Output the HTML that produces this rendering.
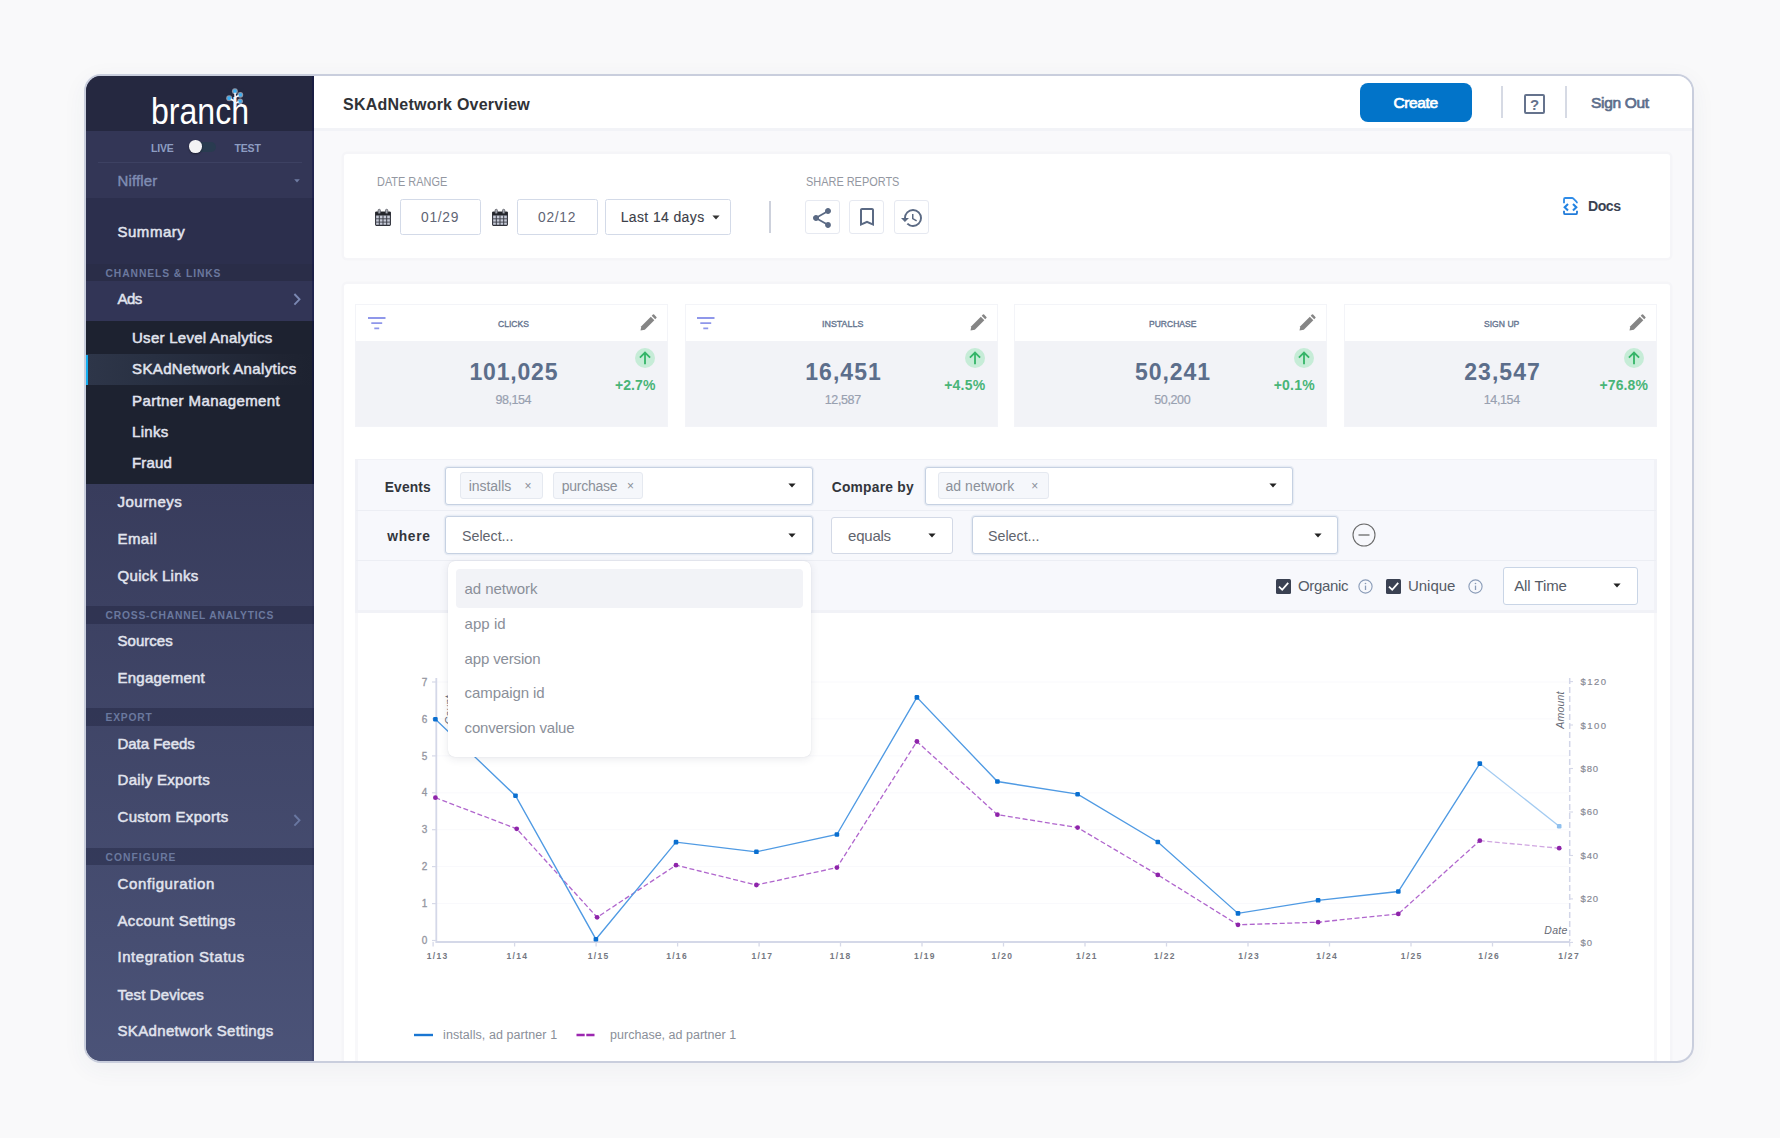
<!DOCTYPE html>
<html lang="en"><head><meta charset="utf-8"><title>SKAdNetwork Overview</title>
<style>
html,body{margin:0;padding:0}
body{width:1780px;height:1138px;overflow:hidden;position:relative;background:#f9f9fa;font-family:"Liberation Sans",sans-serif;}
.r{position:absolute;box-sizing:border-box}
.t{position:absolute;white-space:nowrap}
svg{position:absolute;overflow:visible}
</style></head><body>
<div class="r" style="left:84px;top:74px;width:1610px;height:989px;border:2px solid #c9cedd;border-radius:17px;overflow:hidden;background:#f9f9fb;box-shadow:0 6px 24px rgba(60,70,110,0.055)">
<div class="r" style="left:-86px;top:-76px;width:1780px;height:1138px">
<div class="r" style="left:86px;top:76px;width:228px;height:990px;background:#2c2f4d;"></div>
<div class="r" style="left:86px;top:76px;width:228px;height:55px;background:#252840;"></div>
<div class="r" style="left:86px;top:131px;width:228px;height:67px;background:#333656;"></div>
<div class="r" style="left:98px;top:162px;width:204px;height:1px;background:#3d4162;"></div>
<div class="r" style="left:86px;top:198px;width:228px;height:66px;background:#2c2f4d;"></div>
<div class="r" style="left:86px;top:264px;width:228px;height:17px;background:#2a2d48;"></div>
<div class="r" style="left:86px;top:281px;width:228px;height:40px;background:#323556;"></div>
<div class="r" style="left:86px;top:321px;width:228px;height:163px;background:#1d2230;"></div>
<div class="r" style="left:86px;top:354px;width:228px;height:31px;background:linear-gradient(90deg,#2e3649 0%,#283042 30%,#1f2432 85%,#1d2230 100%)"></div>
<div class="r" style="left:86px;top:354.5px;width:2px;height:30.5px;background:#14adf0;"></div>
<div class="r" style="left:86px;top:484px;width:228px;height:582px;background:linear-gradient(180deg,#383c5c 0%,#4b5378 100%)"></div>
<div class="r" style="left:86px;top:606px;width:228px;height:18px;background:rgba(30,32,60,0.400);"></div>
<div class="r" style="left:86px;top:708px;width:228px;height:18px;background:rgba(30,32,60,0.400);"></div>
<div class="r" style="left:86px;top:848px;width:228px;height:17px;background:rgba(30,32,60,0.400);"></div>
<div class="r" style="left:312px;top:76px;width:2.2px;height:408px;background:rgba(14,18,72,0.450);"></div>
<div class="r" style="left:312px;top:484px;width:2.2px;height:582px;background:rgba(14,18,72,0.130);"></div>
<span class="t" style="left:151.00px;top:91px;font-size:36px;line-height:41px;color:#ffffff;transform:scaleX(0.8903);transform-origin:0 50%;">branch</span>
<svg style="left:224px;top:86px" width="24" height="24" viewBox="0 0 24 24"><path d="M11.400 20 L11 6 M11.300 15.600 L5.600 12.400 M11.200 11.200 L16 9 M11.400 17.200 L16 15.300" stroke="#f4f5fa" stroke-width="1.700" fill="none" stroke-linecap="round"/><g fill="#e8f4ff" opacity="0.55"><circle cx="10.900" cy="5.200" r="2.900"/><circle cx="16.300" cy="8.800" r="2.900"/><circle cx="5.200" cy="12.200" r="3"/><circle cx="16.100" cy="15.200" r="2.800"/></g><g fill="#38aef5"><rect x="9.300" y="3.600" width="3.200" height="3.200" rx="0.800"/><rect x="14.700" y="7.200" width="3.200" height="3.200" rx="0.800"/><rect x="3.500" y="10.500" width="3.400" height="3.400" rx="0.800"/><rect x="14.600" y="13.700" width="3" height="3" rx="0.800"/></g></svg>
<span class="t" style="left:151.00px;top:142px;font-size:10.5px;line-height:12px;color:#8d9dc2;font-weight:700;letter-spacing:-0.180px;">LIVE</span>
<span class="t" style="left:234.50px;top:142px;font-size:10.5px;line-height:12px;color:#8d9dc2;font-weight:700;letter-spacing:-0.179px;">TEST</span>
<div class="r" style="left:190px;top:141.5px;width:25.5px;height:10px;background:#293b50;border-radius:5px"></div>
<div class="r" style="left:189.4px;top:140.3px;width:12.6px;height:12.6px;background:#f3f3f5;border-radius:50%;box-shadow:0 1px 2px rgba(0,0,0,.4)"></div>
<span class="t" style="left:117.50px;top:172px;font-size:15px;line-height:17px;color:#7f8db3;-webkit-text-stroke:0.4px #7f8db3;letter-spacing:0.150px;">Niffler</span>
<svg style="left:294px;top:178.500px" width="6" height="4" viewBox="0 0 6 4"><path d="M0.2 0.3 H5.8 L3 3.6 Z" fill="#6f7ca3"/></svg>
<span class="t" style="left:117.50px;top:223px;font-size:15px;line-height:17px;color:#e1e4ee;-webkit-text-stroke:0.5px #e1e4ee;letter-spacing:0.512px;">Summary</span>
<span class="t" style="left:105.50px;top:268px;font-size:10.3px;line-height:11px;color:#6a789e;font-weight:700;letter-spacing:0.915px;">CHANNELS &amp; LINKS</span>
<span class="t" style="left:117.50px;top:290px;font-size:15px;line-height:17px;color:#e1e4ee;-webkit-text-stroke:0.5px #e1e4ee;letter-spacing:-0.549px;">Ads</span>
<svg style="left:292.700px;top:293px" width="8" height="12" viewBox="0 0 8 12"><path d="M1.400 1 L6.500 6.300 L1.400 11.600" stroke="#7b88b2" stroke-width="1.900" fill="none"/></svg>
<span class="t" style="left:132.00px;top:329px;font-size:15px;line-height:17px;color:#e1e4ee;-webkit-text-stroke:0.5px #e1e4ee;letter-spacing:0.273px;">User Level Analytics</span>
<span class="t" style="left:132.00px;top:360px;font-size:15px;line-height:17px;color:#e1e4ee;-webkit-text-stroke:0.5px #e1e4ee;letter-spacing:0.376px;">SKAdNetwork Analytics</span>
<span class="t" style="left:132.00px;top:392px;font-size:15px;line-height:17px;color:#e1e4ee;-webkit-text-stroke:0.5px #e1e4ee;letter-spacing:0.402px;">Partner Management</span>
<span class="t" style="left:132.00px;top:423px;font-size:15px;line-height:17px;color:#e1e4ee;-webkit-text-stroke:0.5px #e1e4ee;letter-spacing:0.308px;">Links</span>
<span class="t" style="left:132.00px;top:454px;font-size:15px;line-height:17px;color:#e1e4ee;-webkit-text-stroke:0.5px #e1e4ee;letter-spacing:0.141px;">Fraud</span>
<span class="t" style="left:117.50px;top:493px;font-size:15px;line-height:17px;color:#e1e4ee;-webkit-text-stroke:0.5px #e1e4ee;letter-spacing:0.483px;">Journeys</span>
<span class="t" style="left:117.50px;top:530px;font-size:15px;line-height:17px;color:#e1e4ee;-webkit-text-stroke:0.5px #e1e4ee;letter-spacing:0.435px;">Email</span>
<span class="t" style="left:117.50px;top:567px;font-size:15px;line-height:17px;color:#e1e4ee;-webkit-text-stroke:0.5px #e1e4ee;letter-spacing:0.322px;">Quick Links</span>
<span class="t" style="left:105.50px;top:610px;font-size:10.3px;line-height:11px;color:#6a789e;font-weight:700;letter-spacing:0.787px;">CROSS-CHANNEL ANALYTICS</span>
<span class="t" style="left:117.50px;top:632px;font-size:15px;line-height:17px;color:#e1e4ee;-webkit-text-stroke:0.5px #e1e4ee;letter-spacing:0.037px;">Sources</span>
<span class="t" style="left:117.50px;top:669px;font-size:15px;line-height:17px;color:#e1e4ee;-webkit-text-stroke:0.5px #e1e4ee;letter-spacing:0.243px;">Engagement</span>
<span class="t" style="left:105.50px;top:712px;font-size:10.3px;line-height:11px;color:#6a789e;font-weight:700;letter-spacing:0.770px;">EXPORT</span>
<span class="t" style="left:117.50px;top:735px;font-size:15px;line-height:17px;color:#e1e4ee;-webkit-text-stroke:0.5px #e1e4ee;letter-spacing:-0.033px;">Data Feeds</span>
<span class="t" style="left:117.50px;top:771px;font-size:15px;line-height:17px;color:#e1e4ee;-webkit-text-stroke:0.5px #e1e4ee;letter-spacing:0.324px;">Daily Exports</span>
<span class="t" style="left:117.50px;top:808px;font-size:15px;line-height:17px;color:#e1e4ee;-webkit-text-stroke:0.5px #e1e4ee;letter-spacing:0.311px;">Custom Exports</span>
<svg style="left:292.700px;top:814px" width="8" height="12" viewBox="0 0 8 12"><path d="M1.400 1 L6.500 6.300 L1.400 11.600" stroke="#6977a1" stroke-width="1.900" fill="none"/></svg>
<span class="t" style="left:105.50px;top:852px;font-size:10.3px;line-height:11px;color:#6a789e;font-weight:700;letter-spacing:1.025px;">CONFIGURE</span>
<span class="t" style="left:117.50px;top:875px;font-size:15px;line-height:17px;color:#e1e4ee;-webkit-text-stroke:0.5px #e1e4ee;letter-spacing:0.627px;">Configuration</span>
<span class="t" style="left:117.50px;top:912px;font-size:15px;line-height:17px;color:#e1e4ee;-webkit-text-stroke:0.5px #e1e4ee;letter-spacing:0.345px;">Account Settings</span>
<span class="t" style="left:117.50px;top:948px;font-size:15px;line-height:17px;color:#e1e4ee;-webkit-text-stroke:0.5px #e1e4ee;letter-spacing:0.539px;">Integration Status</span>
<span class="t" style="left:117.50px;top:986px;font-size:15px;line-height:17px;color:#e1e4ee;-webkit-text-stroke:0.5px #e1e4ee;letter-spacing:0.111px;">Test Devices</span>
<span class="t" style="left:117.50px;top:1022px;font-size:15px;line-height:17px;color:#e1e4ee;-webkit-text-stroke:0.5px #e1e4ee;letter-spacing:0.342px;">SKAdnetwork Settings</span>
<div class="r" style="left:314px;top:76px;width:1380px;height:52.3px;background:#ffffff;"></div>
<div class="r" style="left:314px;top:128.3px;width:1380px;height:2.5px;background:#f2f3f7;"></div>
<span class="t" style="left:343.00px;top:96px;font-size:16px;line-height:17px;color:#303236;font-weight:700;letter-spacing:0.233px;">SKAdNetwork Overview</span>
<div class="r" style="left:1360px;top:83px;width:112px;height:39px;background:#0274c9;border-radius:8px"></div>
<span class="t" style="left:1393.50px;top:94px;font-size:15.5px;line-height:17px;color:#ffffff;-webkit-text-stroke:0.7px #ffffff;letter-spacing:-0.374px;">Create</span>
<div class="r" style="left:1501px;top:86px;width:1.5px;height:32px;background:#d6dae4;"></div>
<div class="r" style="left:1565px;top:86px;width:1.5px;height:32px;background:#d6dae4;"></div>
<div class="r" style="left:1524px;top:94px;width:21px;height:20px;border:2px solid #65738d;border-radius:2px"></div>
<span class="t" style="left:1530.02px;top:96px;font-size:15px;line-height:17px;color:#65738d;font-weight:700;">?</span>
<span class="t" style="left:1591.00px;top:94px;font-size:15.5px;line-height:17px;color:#5d6e8b;-webkit-text-stroke:0.7px #5d6e8b;letter-spacing:-0.309px;">Sign Out</span>
<div class="r" style="left:344px;top:154px;width:1326px;height:104px;background:#ffffff;border-radius:3px;box-shadow:0 0 0 2.500px #f5f5f8"></div>
<span class="t" style="left:376.80px;top:175px;font-size:12.2px;line-height:14px;color:#9397a1;transform:scaleX(0.8966);transform-origin:0 50%;">DATE RANGE</span>
<span class="t" style="left:806.00px;top:175px;font-size:12.2px;line-height:14px;color:#9397a1;transform:scaleX(0.8975);transform-origin:0 50%;">SHARE REPORTS</span>
<svg style="left:375px;top:208.600px" width="16" height="17" viewBox="0 0 16 17"><rect x="0.600" y="3" width="14.800" height="13.400" rx="0.800" fill="#c6cad7" stroke="#2e3038" stroke-width="1.100"/><path d="M0.600 3 h14.800 v3.400 h-14.800 z" fill="#23252b"/><path d="M0.600 9.800 h14.800 M0.600 13.100 h14.800" stroke="#4a4d58" stroke-width="1"/><path d="M4.300 6.400 v10 M8 6.400 v10 M11.700 6.400 v10" stroke="#3a3d47" stroke-width="1"/><rect x="3.100" y="0.300" width="2.300" height="4.300" rx="1" fill="#a8abb4" stroke="#54565e" stroke-width="0.700"/><rect x="10.500" y="0.300" width="2.300" height="4.300" rx="1" fill="#a8abb4" stroke="#54565e" stroke-width="0.700"/></svg>
<svg style="left:492.2px;top:208.600px" width="16" height="17" viewBox="0 0 16 17"><rect x="0.600" y="3" width="14.800" height="13.400" rx="0.800" fill="#c6cad7" stroke="#2e3038" stroke-width="1.100"/><path d="M0.600 3 h14.800 v3.400 h-14.800 z" fill="#23252b"/><path d="M0.600 9.800 h14.800 M0.600 13.100 h14.800" stroke="#4a4d58" stroke-width="1"/><path d="M4.300 6.400 v10 M8 6.400 v10 M11.700 6.400 v10" stroke="#3a3d47" stroke-width="1"/><rect x="3.100" y="0.300" width="2.300" height="4.300" rx="1" fill="#a8abb4" stroke="#54565e" stroke-width="0.700"/><rect x="10.500" y="0.300" width="2.300" height="4.300" rx="1" fill="#a8abb4" stroke="#54565e" stroke-width="0.700"/></svg>
<div class="r" style="left:400.3px;top:198.7px;width:80.6px;height:36.3px;background:#fff;border:1.500px solid #d3dae8;border-radius:2.500px"></div>
<div class="r" style="left:516.7px;top:198.7px;width:80.9px;height:36.3px;background:#fff;border:1.500px solid #d3dae8;border-radius:2.500px"></div>
<span class="t" style="left:421.00px;top:210px;font-size:13.8px;line-height:15px;color:#5f6474;letter-spacing:0.717px;">01/29</span>
<span class="t" style="left:538.00px;top:210px;font-size:13.8px;line-height:15px;color:#5f6474;letter-spacing:0.717px;">02/12</span>
<div class="r" style="left:605.2px;top:198.7px;width:125.8px;height:36.3px;background:#fff;border:1.500px solid #d3dae8;border-radius:2.500px"></div>
<span class="t" style="left:620.70px;top:209px;font-size:14px;line-height:16px;color:#3c4049;-webkit-text-stroke:0.12px #3c4049;letter-spacing:0.369px;">Last 14 days</span>
<svg style="left:712.3px;top:215px" width="8" height="5" viewBox="0 0 8 5"><path d="M0.4 0.4 H7.6 L4 4.4 Z" fill="#333"/></svg>
<div class="r" style="left:769px;top:201px;width:1.5px;height:32px;background:#cdd1dc;"></div>
<div class="r" style="left:805.2px;top:199.8px;width:34.6px;height:34.6px;background:#fff;border:1.500px solid #e6e9f1;border-radius:3px"></div>
<div class="r" style="left:849.4px;top:199.8px;width:34.6px;height:34.6px;background:#fff;border:1.500px solid #e6e9f1;border-radius:3px"></div>
<div class="r" style="left:894.2px;top:199.8px;width:34.6px;height:34.6px;background:#fff;border:1.500px solid #e6e9f1;border-radius:3px"></div>
<svg style="left:810.300px;top:205.500px" width="24" height="24" viewBox="0 0 24 24"><path d="M18 16.08c-.76 0-1.44.3-1.96.77L8.91 12.7c.05-.23.09-.46.09-.7s-.04-.47-.09-.7l7.05-4.11c.54.5 1.25.81 2.04.81 1.66 0 3-1.34 3-3s-1.340-3-3-3-3 1.340-3 3c0 .24.04.47.09.7L8.040 9.810C7.500 9.310 6.790 9 6 9c-1.660 0-3 1.340-3 3s1.340 3 3 3c.79 0 1.500-.31 2.040-.81l7.120 4.160c-.05.21-.08.43-.08.650 0 1.610 1.310 2.920 2.920 2.920s2.920-1.310 2.920-2.920-1.310-2.920-2.920-2.920z" fill="#5b6a84"/></svg>
<svg style="left:855.300px;top:205.200px" width="24" height="24" viewBox="0 0 24 24"><path d="M17 3H7c-1.100 0-2 .9-2 2v16l7-3 7 3V5c0-1.100-.9-2-2-2zm0 15l-5-2.180L7 18V5h10v13z" fill="#5b6a84"/></svg>
<svg style="left:900.300px;top:205.500px" width="24" height="24" viewBox="0 0 24 24"><path d="M13 3a9 9 0 0 0-9 9H1l3.890 3.890.07.14L9 12H6c0-3.870 3.130-7 7-7s7 3.130 7 7-3.130 7-7 7c-1.930 0-3.680-.79-4.940-2.060l-1.420 1.420A8.954 8.954 0 0 0 13 21a9 9 0 0 0 0-18zm-1 5v5l4.280 2.540.72-1.210-3.500-2.080V8H12z" fill="#5b6a84"/></svg>
<svg style="left:1563.300px;top:196.900px" width="15" height="18.200" viewBox="0 0 15 18.200"><path d="M1 6.300 V2.300 Q1 1 2.300 1 H9 Q9.800 1 10.400 1.600 L13.400 4.600 Q14 5.200 14 6.300" fill="none" stroke="#2f8ce8" stroke-width="1.800"/><path d="M1 13.800 V15.900 Q1 17.200 2.300 17.200 H12.700 Q14 17.200 14 15.900 V13.800" fill="none" stroke="#1f7ad9" stroke-width="1.800"/><path d="M5 7.100 L1.700 10.300 L5 13.500 M10 7.100 L13.300 10.300 L10 13.500" fill="none" stroke="#2383e2" stroke-width="2.100"/></svg>
<span class="t" style="left:1587.90px;top:198px;font-size:14.1px;line-height:16px;color:#3a4252;font-weight:700;letter-spacing:-0.426px;">Docs</span>
<div class="r" style="left:344px;top:284px;width:1326px;height:800px;background:#ffffff;border-radius:3px;box-shadow:0 0 0 2.500px #f5f5f8"></div>
<div class="r" style="left:355px;top:304px;width:313px;height:123px;background:#f2f3f7;border:1px solid #f3f4f8"></div>
<div class="r" style="left:356px;top:305px;width:311px;height:36px;background:#ffffff;"></div>
<span class="t" style="left:498.00px;top:318px;font-size:9.5px;line-height:11px;color:#66758f;-webkit-text-stroke:0.38px #66758f;transform:scaleX(0.8984);transform-origin:0 50%;">CLICKS</span>
<span class="t" style="left:469.50px;top:359px;font-size:23px;line-height:26px;color:#5c6e8b;font-weight:700;letter-spacing:0.810px;">101,025</span>
<span class="t" style="left:495.50px;top:393px;font-size:12.5px;line-height:14px;color:#98a0b0;-webkit-text-stroke:0.2px #98a0b0;letter-spacing:-0.467px;">98,154</span>
<span class="t" style="left:614.95px;top:377px;font-size:14px;line-height:16px;color:#49b577;font-weight:700;letter-spacing:0.104px;">+2.7%</span>
<svg style="left:635px;top:347.500px" width="20" height="20" viewBox="0 0 20 20"><circle cx="10" cy="10" r="10" fill="#c6ecd7"/><path d="M10 16.300 V4.600 M4.900 9.600 L10 4.500 L15.100 9.600" stroke="#34b568" stroke-width="1.800" fill="none"/></svg>
<svg style="left:640px;top:314px" width="17" height="17" viewBox="0 0 17 17"><path d="M0.500 16.500 L1.300 12.200 L10.800 2.700 L14.300 6.200 L4.800 15.700 Z" fill="#858585"/><path d="M11.700 1.800 L12.900 0.600 Q13.500 0 14.100 0.600 L16.400 2.900 Q17 3.500 16.400 4.100 L15.200 5.300 Z" fill="#858585"/></svg>
<svg style="left:367.5px;top:317px" width="18" height="13" viewBox="0 0 18 13"><path d="M0 1 H17.500 M3.300 6.200 H14.200 M6.300 11.400 H11.200" stroke="#8f97ea" stroke-width="1.800" fill="none"/></svg>
<div class="r" style="left:684.5px;top:304px;width:313px;height:123px;background:#f2f3f7;border:1px solid #f3f4f8"></div>
<div class="r" style="left:685.5px;top:305px;width:311px;height:36px;background:#ffffff;"></div>
<span class="t" style="left:822.25px;top:318px;font-size:9.5px;line-height:11px;color:#66758f;-webkit-text-stroke:0.38px #66758f;transform:scaleX(0.9354);transform-origin:0 50%;">INSTALLS</span>
<span class="t" style="left:805.25px;top:359px;font-size:23px;line-height:26px;color:#5c6e8b;font-weight:700;letter-spacing:1.030px;">16,451</span>
<span class="t" style="left:824.75px;top:393px;font-size:12.5px;line-height:14px;color:#98a0b0;-webkit-text-stroke:0.2px #98a0b0;letter-spacing:-0.367px;">12,587</span>
<span class="t" style="left:944.20px;top:377px;font-size:14px;line-height:16px;color:#49b577;font-weight:700;letter-spacing:0.229px;">+4.5%</span>
<svg style="left:964.5px;top:347.500px" width="20" height="20" viewBox="0 0 20 20"><circle cx="10" cy="10" r="10" fill="#c6ecd7"/><path d="M10 16.300 V4.600 M4.900 9.600 L10 4.500 L15.100 9.600" stroke="#34b568" stroke-width="1.800" fill="none"/></svg>
<svg style="left:969.5px;top:314px" width="17" height="17" viewBox="0 0 17 17"><path d="M0.500 16.500 L1.300 12.200 L10.800 2.700 L14.300 6.200 L4.800 15.700 Z" fill="#858585"/><path d="M11.700 1.800 L12.900 0.600 Q13.500 0 14.100 0.600 L16.400 2.900 Q17 3.500 16.400 4.100 L15.200 5.300 Z" fill="#858585"/></svg>
<svg style="left:697.0px;top:317px" width="18" height="13" viewBox="0 0 18 13"><path d="M0 1 H17.500 M3.300 6.200 H14.200 M6.300 11.400 H11.200" stroke="#8f97ea" stroke-width="1.800" fill="none"/></svg>
<div class="r" style="left:1014px;top:304px;width:313px;height:123px;background:#f2f3f7;border:1px solid #f3f4f8"></div>
<div class="r" style="left:1015px;top:305px;width:311px;height:36px;background:#ffffff;"></div>
<span class="t" style="left:1148.75px;top:318px;font-size:9.5px;line-height:11px;color:#66758f;-webkit-text-stroke:0.38px #66758f;transform:scaleX(0.8966);transform-origin:0 50%;">PURCHASE</span>
<span class="t" style="left:1135.00px;top:359px;font-size:23px;line-height:26px;color:#5c6e8b;font-weight:700;letter-spacing:0.930px;">50,241</span>
<span class="t" style="left:1154.25px;top:393px;font-size:12.5px;line-height:14px;color:#98a0b0;-webkit-text-stroke:0.2px #98a0b0;letter-spacing:-0.367px;">50,200</span>
<span class="t" style="left:1273.70px;top:377px;font-size:14px;line-height:16px;color:#49b577;font-weight:700;letter-spacing:0.229px;">+0.1%</span>
<svg style="left:1294px;top:347.500px" width="20" height="20" viewBox="0 0 20 20"><circle cx="10" cy="10" r="10" fill="#c6ecd7"/><path d="M10 16.300 V4.600 M4.900 9.600 L10 4.500 L15.100 9.600" stroke="#34b568" stroke-width="1.800" fill="none"/></svg>
<svg style="left:1299px;top:314px" width="17" height="17" viewBox="0 0 17 17"><path d="M0.500 16.500 L1.300 12.200 L10.800 2.700 L14.300 6.200 L4.800 15.700 Z" fill="#858585"/><path d="M11.700 1.800 L12.900 0.600 Q13.500 0 14.100 0.600 L16.400 2.900 Q17 3.500 16.400 4.100 L15.200 5.300 Z" fill="#858585"/></svg>
<div class="r" style="left:1343.5px;top:304px;width:313px;height:123px;background:#f2f3f7;border:1px solid #f3f4f8"></div>
<div class="r" style="left:1344.5px;top:305px;width:311px;height:36px;background:#ffffff;"></div>
<span class="t" style="left:1484.25px;top:318px;font-size:9.5px;line-height:11px;color:#66758f;-webkit-text-stroke:0.38px #66758f;transform:scaleX(0.9044);transform-origin:0 50%;">SIGN UP</span>
<span class="t" style="left:1464.25px;top:359px;font-size:23px;line-height:26px;color:#5c6e8b;font-weight:700;letter-spacing:1.030px;">23,547</span>
<span class="t" style="left:1483.75px;top:393px;font-size:12.5px;line-height:14px;color:#98a0b0;-webkit-text-stroke:0.2px #98a0b0;letter-spacing:-0.367px;">14,154</span>
<span class="t" style="left:1599.45px;top:377px;font-size:14px;line-height:16px;color:#49b577;font-weight:700;letter-spacing:0.126px;">+76.8%</span>
<svg style="left:1623.5px;top:347.500px" width="20" height="20" viewBox="0 0 20 20"><circle cx="10" cy="10" r="10" fill="#c6ecd7"/><path d="M10 16.300 V4.600 M4.900 9.600 L10 4.500 L15.100 9.600" stroke="#34b568" stroke-width="1.800" fill="none"/></svg>
<svg style="left:1628.5px;top:314px" width="17" height="17" viewBox="0 0 17 17"><path d="M0.500 16.500 L1.300 12.200 L10.800 2.700 L14.300 6.200 L4.800 15.700 Z" fill="#858585"/><path d="M11.700 1.800 L12.900 0.600 Q13.500 0 14.100 0.600 L16.400 2.900 Q17 3.500 16.400 4.100 L15.200 5.300 Z" fill="#858585"/></svg>
<div class="r" style="left:355px;top:459px;width:1302px;height:153.5px;background:#f7f8fc;border:3px solid #f1f2f7;border-top-width:1.500px"></div>
<div class="r" style="left:356px;top:510px;width:1300px;height:1px;background:#eceef4;"></div>
<div class="r" style="left:356px;top:560px;width:1300px;height:1px;background:#eceef4;"></div>
<span class="t" style="left:384.70px;top:480px;font-size:13.8px;line-height:15px;color:#33363c;font-weight:700;letter-spacing:0.169px;">Events</span>
<div class="r" style="left:445px;top:467px;width:368px;height:38px;background:#fff;border:1px solid #c6d1e2;border-radius:3px;box-shadow:0 0 0 1.200px rgba(205,215,231,0.380)"></div>
<div class="r" style="left:460px;top:472.3px;width:83px;height:26.7px;background:#f5f7fb;border:1px solid #e5e9f0;border-radius:3px"></div>
<span class="t" style="left:468.70px;top:478px;font-size:14px;line-height:16px;color:#8b9099;letter-spacing:-0.028px;">installs</span>
<span class="t" style="left:524.50px;top:479px;font-size:12px;line-height:14px;color:#8b9099;">×</span>
<div class="r" style="left:553px;top:472.3px;width:90px;height:26.7px;background:#f5f7fb;border:1px solid #e5e9f0;border-radius:3px"></div>
<span class="t" style="left:561.70px;top:478px;font-size:14px;line-height:16px;color:#8b9099;letter-spacing:-0.256px;">purchase</span>
<span class="t" style="left:627.00px;top:479px;font-size:12px;line-height:14px;color:#8b9099;">×</span>
<svg style="left:788.4px;top:483.3px" width="8" height="5" viewBox="0 0 8 5"><path d="M0.4 0.4 H7.6 L4 4.4 Z" fill="#222"/></svg>
<span class="t" style="left:831.70px;top:480px;font-size:13.8px;line-height:15px;color:#33363c;font-weight:700;letter-spacing:0.250px;">Compare by</span>
<div class="r" style="left:924.5px;top:466.5px;width:368px;height:38px;background:#fff;border:1px solid #c6d1e2;border-radius:3px;box-shadow:0 0 0 1.200px rgba(205,215,231,0.380)"></div>
<div class="r" style="left:938px;top:472.3px;width:110.5px;height:26.7px;background:#f5f7fb;border:1px solid #e5e9f0;border-radius:3px"></div>
<span class="t" style="left:945.50px;top:478px;font-size:14px;line-height:16px;color:#8b9099;letter-spacing:0.035px;">ad network</span>
<span class="t" style="left:1031.30px;top:479px;font-size:12px;line-height:14px;color:#8b9099;">×</span>
<svg style="left:1268.8px;top:483.3px" width="8" height="5" viewBox="0 0 8 5"><path d="M0.4 0.4 H7.6 L4 4.4 Z" fill="#222"/></svg>
<span class="t" style="left:387.30px;top:529px;font-size:13.8px;line-height:15px;color:#33363c;font-weight:700;letter-spacing:0.704px;">where</span>
<div class="r" style="left:445px;top:516px;width:368px;height:38px;background:#fff;border:1px solid #c6d1e2;border-radius:3px;box-shadow:0 0 0 1.200px rgba(205,215,231,0.380)"></div>
<span class="t" style="left:462.00px;top:527px;font-size:15px;line-height:17px;color:#5f646d;transform:scaleX(0.9503);transform-origin:0 50%;">Select...</span>
<svg style="left:788.4px;top:533px" width="8" height="5" viewBox="0 0 8 5"><path d="M0.4 0.4 H7.6 L4 4.4 Z" fill="#222"/></svg>
<div class="r" style="left:831px;top:516.5px;width:121.5px;height:37.5px;background:#fff;border:1px solid #d3d9e6;border-radius:3px"></div>
<span class="t" style="left:848.10px;top:527px;font-size:15px;line-height:17px;color:#5f646d;letter-spacing:-0.241px;">equals</span>
<svg style="left:928.1px;top:533px" width="8" height="5" viewBox="0 0 8 5"><path d="M0.4 0.4 H7.6 L4 4.4 Z" fill="#222"/></svg>
<div class="r" style="left:972.3px;top:516px;width:366px;height:38px;background:#fff;border:1px solid #c6d1e2;border-radius:3px;box-shadow:0 0 0 1.200px rgba(205,215,231,0.380)"></div>
<span class="t" style="left:988.30px;top:527px;font-size:15px;line-height:17px;color:#5f646d;transform:scaleX(0.9503);transform-origin:0 50%;">Select...</span>
<svg style="left:1314.2px;top:533px" width="8" height="5" viewBox="0 0 8 5"><path d="M0.4 0.4 H7.6 L4 4.4 Z" fill="#222"/></svg>
<svg style="left:1352px;top:523px" width="24" height="24" viewBox="0 0 24 24"><circle cx="12" cy="12" r="11" fill="none" stroke="#6a6a6a" stroke-width="1.100"/><path d="M6.500 12 H17.500" stroke="#6a6a6a" stroke-width="1.300"/></svg>
<svg style="left:1276.2px;top:578.800px" width="15" height="15" viewBox="0 0 15 15"><rect x="0" y="0" width="15" height="15" rx="1.500" fill="#3a4152"/><path d="M3 7.600 L6.200 10.800 L12.200 3.800" stroke="#fff" stroke-width="1.800" fill="none"/></svg>
<span class="t" style="left:1298.00px;top:577px;font-size:15px;line-height:17px;color:#555b66;letter-spacing:-0.354px;">Organic</span>
<svg style="left:1358.1px;top:578.500px" width="15" height="15" viewBox="0 0 15 15"><circle cx="7.500" cy="7.500" r="6.600" fill="none" stroke="#8a9cb8" stroke-width="1.100"/><path d="M7.500 6.600 V11" stroke="#8a9cb8" stroke-width="1.300"/><circle cx="7.500" cy="4.500" r="0.800" fill="#8a9cb8"/></svg>
<svg style="left:1385.8px;top:578.800px" width="15" height="15" viewBox="0 0 15 15"><rect x="0" y="0" width="15" height="15" rx="1.500" fill="#3a4152"/><path d="M3 7.600 L6.200 10.800 L12.200 3.800" stroke="#fff" stroke-width="1.800" fill="none"/></svg>
<span class="t" style="left:1408.00px;top:577px;font-size:15px;line-height:17px;color:#555b66;letter-spacing:-0.027px;">Unique</span>
<svg style="left:1467.7px;top:578.500px" width="15" height="15" viewBox="0 0 15 15"><circle cx="7.500" cy="7.500" r="6.600" fill="none" stroke="#8a9cb8" stroke-width="1.100"/><path d="M7.500 6.600 V11" stroke="#8a9cb8" stroke-width="1.300"/><circle cx="7.500" cy="4.500" r="0.800" fill="#8a9cb8"/></svg>
<div class="r" style="left:1502.5px;top:567px;width:135.5px;height:37.5px;background:#fff;border:1px solid #c9d5e6;border-radius:3px"></div>
<span class="t" style="left:1514.20px;top:577px;font-size:15px;line-height:17px;color:#555b66;letter-spacing:-0.092px;">All Time</span>
<svg style="left:1613.4px;top:583px" width="8" height="5" viewBox="0 0 8 5"><path d="M0.4 0.4 H7.6 L4 4.4 Z" fill="#222"/></svg>
<div class="r" style="left:355px;top:612.5px;width:1302px;height:500px;background:#ffffff;border-left:3px solid #f8f8fa;border-right:3px solid #f8f8fa"></div>
<svg style="left:0;top:0" width="1780" height="1138" viewBox="0 0 1780 1138"><path d="M437 903.6 H1569" stroke="#f9f9fc" stroke-width="1"/><path d="M437 866.6 H1569" stroke="#f9f9fc" stroke-width="1"/><path d="M437 829.7 H1569" stroke="#f9f9fc" stroke-width="1"/><path d="M437 792.8 H1569" stroke="#f9f9fc" stroke-width="1"/><path d="M437 755.9 H1569" stroke="#f9f9fc" stroke-width="1"/><path d="M437 718.9 H1569" stroke="#f9f9fc" stroke-width="1"/><path d="M437 682.0 H1569" stroke="#f9f9fc" stroke-width="1"/><path d="M436.300 678 V942 H1570" stroke="#d4d8e8" stroke-width="1.800" fill="none"/><path d="M1569.7 678 V941" stroke="#d2d6e8" stroke-width="1.500" stroke-dasharray="6 3" fill="none"/><path d="M433.1 942 V946.500" stroke="#d6d9e8" stroke-width="1.300"/><path d="M514.6 942 V946.500" stroke="#d6d9e8" stroke-width="1.300"/><path d="M596.1 942 V946.500" stroke="#d6d9e8" stroke-width="1.300"/><path d="M677.6 942 V946.500" stroke="#d6d9e8" stroke-width="1.300"/><path d="M759.1 942 V946.500" stroke="#d6d9e8" stroke-width="1.300"/><path d="M840.5 942 V946.500" stroke="#d6d9e8" stroke-width="1.300"/><path d="M922.0 942 V946.500" stroke="#d6d9e8" stroke-width="1.300"/><path d="M1003.5 942 V946.500" stroke="#d6d9e8" stroke-width="1.300"/><path d="M1085.0 942 V946.500" stroke="#d6d9e8" stroke-width="1.300"/><path d="M1166.5 942 V946.500" stroke="#d6d9e8" stroke-width="1.300"/><path d="M1248.0 942 V946.500" stroke="#d6d9e8" stroke-width="1.300"/><path d="M1329.5 942 V946.500" stroke="#d6d9e8" stroke-width="1.300"/><path d="M1411.0 942 V946.500" stroke="#d6d9e8" stroke-width="1.300"/><path d="M1492.5 942 V946.500" stroke="#d6d9e8" stroke-width="1.300"/><path d="M1569.7 942 V946.500" stroke="#d6d9e8" stroke-width="1.300"/><path d="M432 940.5 H436" stroke="#d6d9e8" stroke-width="1.200"/><path d="M432 903.6 H436" stroke="#d6d9e8" stroke-width="1.200"/><path d="M432 866.6 H436" stroke="#d6d9e8" stroke-width="1.200"/><path d="M432 829.7 H436" stroke="#d6d9e8" stroke-width="1.200"/><path d="M432 792.8 H436" stroke="#d6d9e8" stroke-width="1.200"/><path d="M432 755.9 H436" stroke="#d6d9e8" stroke-width="1.200"/><path d="M432 718.9 H436" stroke="#d6d9e8" stroke-width="1.200"/><path d="M432 682.0 H436" stroke="#d6d9e8" stroke-width="1.200"/><path d="M1569 942.4 H1573" stroke="#d4d7e8" stroke-width="1.100"/><path d="M1569 898.9 H1573" stroke="#d4d7e8" stroke-width="1.100"/><path d="M1569 855.5 H1573" stroke="#d4d7e8" stroke-width="1.100"/><path d="M1569 812.0 H1573" stroke="#d4d7e8" stroke-width="1.100"/><path d="M1569 768.5 H1573" stroke="#d4d7e8" stroke-width="1.100"/><path d="M1569 725.0 H1573" stroke="#d4d7e8" stroke-width="1.100"/><path d="M1569 681.6 H1573" stroke="#d4d7e8" stroke-width="1.100"/><path d="M435.4 797.7 L516.7 828.8 L597.1 917.3 L676.0 865.2 L756.4 885.0 L836.9 867.6 L916.9 741.5 L997.4 814.7 L1077.6 827.6 L1157.8 874.9 L1238.0 924.8 L1318.1 922.2 L1398.3 913.9 L1479.8 840.7" stroke="#b066cd" stroke-width="1.300" stroke-dasharray="5 2.500" fill="none"/><path d="M1479.8 840.7 L1559.2 848.2" stroke="#d0a6e1" stroke-width="1.300" stroke-dasharray="5 2.500" fill="none"/><path d="M435.4 719.2 L515.5 795.7 L595.9 939.2 L676.0 842.1 L756.4 851.8 L836.9 834.5 L916.9 697.4 L997.4 781.5 L1077.6 794.2 L1157.8 842.0 L1238.0 913.4 L1318.1 900.3 L1398.3 891.5 L1479.8 763.6" stroke="#4f9ae3" stroke-width="1.350" fill="none"/><path d="M1479.8 763.6 L1559.2 826.2" stroke="#a3cbf1" stroke-width="1.300" fill="none"/><circle cx="435.4" cy="797.7" r="2.400" fill="#8e24aa"/><circle cx="516.7" cy="828.8" r="2.400" fill="#8e24aa"/><circle cx="597.1" cy="917.3" r="2.400" fill="#8e24aa"/><circle cx="676.0" cy="865.2" r="2.400" fill="#8e24aa"/><circle cx="756.4" cy="885.0" r="2.400" fill="#8e24aa"/><circle cx="836.9" cy="867.6" r="2.400" fill="#8e24aa"/><circle cx="916.9" cy="741.5" r="2.400" fill="#8e24aa"/><circle cx="997.4" cy="814.7" r="2.400" fill="#8e24aa"/><circle cx="1077.6" cy="827.6" r="2.400" fill="#8e24aa"/><circle cx="1157.8" cy="874.9" r="2.400" fill="#8e24aa"/><circle cx="1238.0" cy="924.8" r="2.400" fill="#8e24aa"/><circle cx="1318.1" cy="922.2" r="2.400" fill="#8e24aa"/><circle cx="1398.3" cy="913.9" r="2.400" fill="#8e24aa"/><circle cx="1479.8" cy="840.7" r="2.400" fill="#8e24aa"/><circle cx="1559.2" cy="848.2" r="2.400" fill="#8e24aa"/><rect x="433.1" y="716.9" width="4.600" height="4.600" rx="1.200" fill="#0a6fd0"/><rect x="513.2" y="793.4" width="4.600" height="4.600" rx="1.200" fill="#0a6fd0"/><rect x="593.6" y="936.9" width="4.600" height="4.600" rx="1.200" fill="#0a6fd0"/><rect x="673.7" y="839.8" width="4.600" height="4.600" rx="1.200" fill="#0a6fd0"/><rect x="754.1" y="849.5" width="4.600" height="4.600" rx="1.200" fill="#0a6fd0"/><rect x="834.6" y="832.2" width="4.600" height="4.600" rx="1.200" fill="#0a6fd0"/><rect x="914.6" y="695.1" width="4.600" height="4.600" rx="1.200" fill="#0a6fd0"/><rect x="995.1" y="779.2" width="4.600" height="4.600" rx="1.200" fill="#0a6fd0"/><rect x="1075.3" y="791.9" width="4.600" height="4.600" rx="1.200" fill="#0a6fd0"/><rect x="1155.5" y="839.7" width="4.600" height="4.600" rx="1.200" fill="#0a6fd0"/><rect x="1235.7" y="911.1" width="4.600" height="4.600" rx="1.200" fill="#0a6fd0"/><rect x="1315.8" y="898.0" width="4.600" height="4.600" rx="1.200" fill="#0a6fd0"/><rect x="1396.0" y="889.2" width="4.600" height="4.600" rx="1.200" fill="#0a6fd0"/><rect x="1477.5" y="761.3" width="4.600" height="4.600" rx="1.200" fill="#0a6fd0"/><rect x="1556.9" y="823.9" width="4.600" height="4.600" rx="1.200" fill="#8fc0ee"/><path d="M414 1035 H433" stroke="#1976d2" stroke-width="2.400"/><path d="M576.500 1035 H595" stroke="#9c27b0" stroke-width="2.400" stroke-dasharray="8.200 1.600"/></svg>
<span class="t" style="left:421.64px;top:935px;font-size:10px;line-height:11px;color:#9395a0;-webkit-text-stroke:0.3px #9395a0;">0</span>
<span class="t" style="left:421.64px;top:898px;font-size:10px;line-height:11px;color:#9395a0;-webkit-text-stroke:0.3px #9395a0;">1</span>
<span class="t" style="left:421.64px;top:861px;font-size:10px;line-height:11px;color:#9395a0;-webkit-text-stroke:0.3px #9395a0;">2</span>
<span class="t" style="left:421.64px;top:824px;font-size:10px;line-height:11px;color:#9395a0;-webkit-text-stroke:0.3px #9395a0;">3</span>
<span class="t" style="left:421.64px;top:787px;font-size:10px;line-height:11px;color:#9395a0;-webkit-text-stroke:0.3px #9395a0;">4</span>
<span class="t" style="left:421.64px;top:751px;font-size:10px;line-height:11px;color:#9395a0;-webkit-text-stroke:0.3px #9395a0;">5</span>
<span class="t" style="left:421.64px;top:714px;font-size:10px;line-height:11px;color:#9395a0;-webkit-text-stroke:0.3px #9395a0;">6</span>
<span class="t" style="left:421.64px;top:677px;font-size:10px;line-height:11px;color:#9395a0;-webkit-text-stroke:0.3px #9395a0;">7</span>
<span class="t" style="left:426.75px;top:951px;font-size:8.5px;line-height:10px;color:#757882;font-weight:700;letter-spacing:1.319px;">1/13</span>
<span class="t" style="left:506.45px;top:951px;font-size:8.5px;line-height:10px;color:#757882;font-weight:700;letter-spacing:1.319px;">1/14</span>
<span class="t" style="left:587.75px;top:951px;font-size:8.5px;line-height:10px;color:#757882;font-weight:700;letter-spacing:1.319px;">1/15</span>
<span class="t" style="left:666.15px;top:951px;font-size:8.5px;line-height:10px;color:#757882;font-weight:700;letter-spacing:1.319px;">1/16</span>
<span class="t" style="left:751.45px;top:951px;font-size:8.5px;line-height:10px;color:#757882;font-weight:700;letter-spacing:1.319px;">1/17</span>
<span class="t" style="left:829.75px;top:951px;font-size:8.5px;line-height:10px;color:#757882;font-weight:700;letter-spacing:1.319px;">1/18</span>
<span class="t" style="left:913.95px;top:951px;font-size:8.5px;line-height:10px;color:#757882;font-weight:700;letter-spacing:1.319px;">1/19</span>
<span class="t" style="left:991.55px;top:951px;font-size:8.5px;line-height:10px;color:#757882;font-weight:700;letter-spacing:1.319px;">1/20</span>
<span class="t" style="left:1076.05px;top:951px;font-size:8.5px;line-height:10px;color:#757882;font-weight:700;letter-spacing:1.319px;">1/21</span>
<span class="t" style="left:1154.05px;top:951px;font-size:8.5px;line-height:10px;color:#757882;font-weight:700;letter-spacing:1.319px;">1/22</span>
<span class="t" style="left:1238.25px;top:951px;font-size:8.5px;line-height:10px;color:#757882;font-weight:700;letter-spacing:1.319px;">1/23</span>
<span class="t" style="left:1316.25px;top:951px;font-size:8.5px;line-height:10px;color:#757882;font-weight:700;letter-spacing:1.319px;">1/24</span>
<span class="t" style="left:1400.75px;top:951px;font-size:8.5px;line-height:10px;color:#757882;font-weight:700;letter-spacing:1.319px;">1/25</span>
<span class="t" style="left:1478.35px;top:951px;font-size:8.5px;line-height:10px;color:#757882;font-weight:700;letter-spacing:1.319px;">1/26</span>
<span class="t" style="left:1558.15px;top:951px;font-size:8.5px;line-height:10px;color:#757882;font-weight:700;letter-spacing:1.319px;">1/27</span>
<span class="t" style="left:1580.60px;top:937px;font-size:9.5px;line-height:11px;color:#888a95;-webkit-text-stroke:0.18px #888a95;letter-spacing:0.844px;">$0</span>
<span class="t" style="left:1580.60px;top:893px;font-size:9.5px;line-height:11px;color:#888a95;-webkit-text-stroke:0.18px #888a95;letter-spacing:0.780px;">$20</span>
<span class="t" style="left:1580.60px;top:850px;font-size:9.5px;line-height:11px;color:#888a95;-webkit-text-stroke:0.18px #888a95;letter-spacing:0.780px;">$40</span>
<span class="t" style="left:1580.60px;top:806px;font-size:9.5px;line-height:11px;color:#888a95;-webkit-text-stroke:0.18px #888a95;letter-spacing:0.780px;">$60</span>
<span class="t" style="left:1580.60px;top:763px;font-size:9.5px;line-height:11px;color:#888a95;-webkit-text-stroke:0.18px #888a95;letter-spacing:0.780px;">$80</span>
<span class="t" style="left:1580.60px;top:720px;font-size:9.5px;line-height:11px;color:#888a95;-webkit-text-stroke:0.18px #888a95;letter-spacing:1.426px;">$100</span>
<span class="t" style="left:1580.60px;top:676px;font-size:9.5px;line-height:11px;color:#888a95;-webkit-text-stroke:0.18px #888a95;letter-spacing:1.426px;">$120</span>
<span class="t" style="left:1544.30px;top:924px;font-size:10.5px;line-height:12px;color:#666a75;font-style:italic;letter-spacing:0.273px;">Date</span>
<span class="t" style="left:1559.600px;top:710px;font-size:10.500px;line-height:12px;font-style:italic;color:#666a75;transform:translate(-50%,-50%) rotate(-90deg);letter-spacing:0.200px">Amount</span>
<span class="t" style="left:449px;top:710px;font-size:10.500px;line-height:12px;font-style:italic;color:#666a75;transform:translate(-50%,-50%) rotate(-90deg);letter-spacing:0.200px">Count</span>
<span class="t" style="left:443.10px;top:1028px;font-size:12.5px;line-height:14px;color:#8a8f99;letter-spacing:0.068px;">installs, ad partner 1</span>
<span class="t" style="left:610.10px;top:1028px;font-size:12.5px;line-height:14px;color:#8a8f99;letter-spacing:0.011px;">purchase, ad partner 1</span>
<div class="r" style="left:448px;top:561px;width:363px;height:195.5px;background:#ffffff;border-radius:7px;box-shadow:0 2px 9px rgba(40,50,80,0.10),0 0 1px rgba(40,50,80,0.16)"></div>
<div class="r" style="left:455.7px;top:568.7px;width:347.3px;height:39px;background:#f2f3f7;border-radius:4px"></div>
<span class="t" style="left:464.60px;top:580px;font-size:15px;line-height:17px;color:#8a8f99;letter-spacing:-0.064px;">ad network</span>
<span class="t" style="left:464.60px;top:615px;font-size:15px;line-height:17px;color:#8a8f99;letter-spacing:0.026px;">app id</span>
<span class="t" style="left:464.60px;top:650px;font-size:15px;line-height:17px;color:#8a8f99;letter-spacing:-0.155px;">app version</span>
<span class="t" style="left:464.60px;top:684px;font-size:15px;line-height:17px;color:#8a8f99;letter-spacing:-0.089px;">campaign id</span>
<span class="t" style="left:464.60px;top:719px;font-size:15px;line-height:17px;color:#8a8f99;letter-spacing:-0.171px;">conversion value</span>
</div></div>
</body></html>
